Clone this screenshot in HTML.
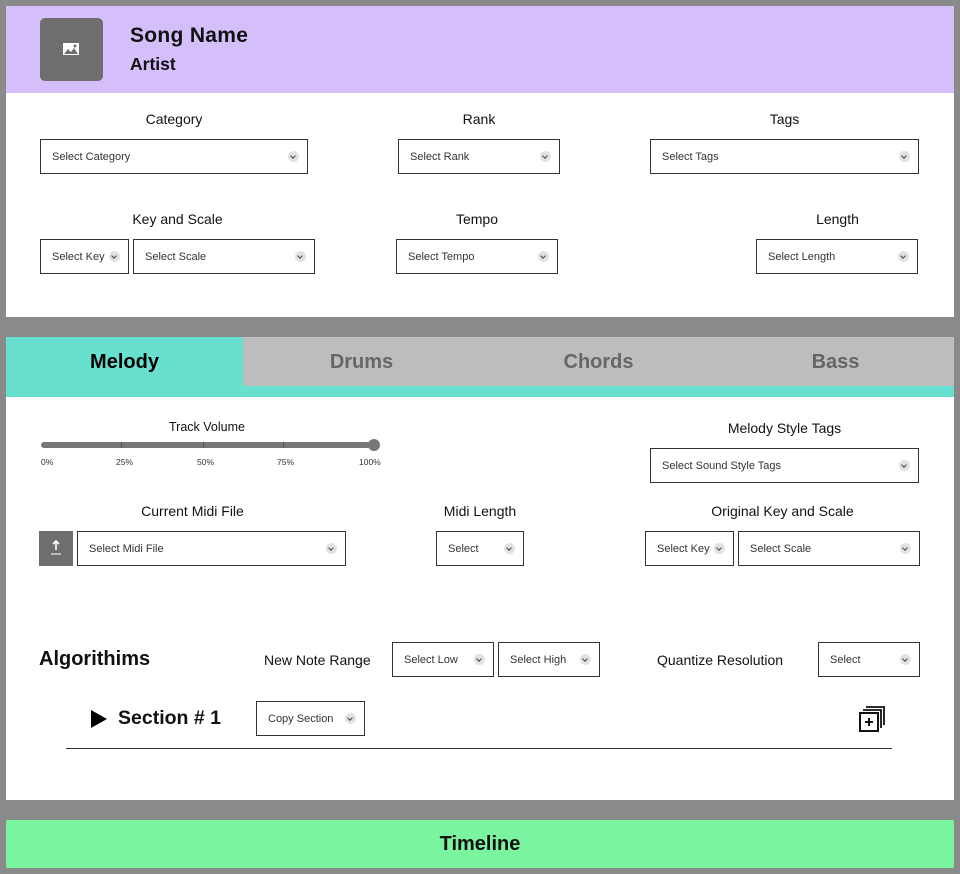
<!DOCTYPE html>
<html><head><meta charset="utf-8"><style>
*{margin:0;padding:0;box-sizing:border-box}
body{width:960px;height:874px;background:#8a8a8a;position:relative;overflow:hidden;font-family:"Liberation Sans",sans-serif;color:#111}
.a{position:absolute}
.p{position:absolute;background:#fff}
.lbl{position:absolute;font-size:14px;color:#111;text-align:center;white-space:nowrap}
.dd{position:absolute;height:35px;border:1px solid #333;background:#fff;font-size:11px;color:#333;padding-left:11px;line-height:35px;white-space:nowrap}
.dd:after{content:"";position:absolute;right:8px;top:11px;width:11px;height:11px;border-radius:50%;background:#e2e2e2}
.dd:before{content:"";position:absolute;right:12px;top:14px;width:3px;height:3px;border-right:1px solid #444;border-bottom:1px solid #444;transform:rotate(45deg);z-index:2}
.tab{position:absolute;top:337px;height:49px;line-height:50px;text-align:center;font-weight:bold;font-size:20px;color:#666}
.tick{position:absolute;font-size:8.5px;color:#333}
</style></head><body>
<div class="p" style="left:6px;top:6px;width:948px;height:311px"></div>
<div class="a" style="left:6px;top:6px;width:948px;height:87px;background:#d4bffa"></div>
<div class="a" style="left:40px;top:18px;width:63px;height:63px;background:#6e6e6e;border-radius:5px"></div>
<svg class="a" style="left:61px;top:40px" width="20" height="18" viewBox="0 0 20 18"><rect x="2" y="3" width="16" height="12" fill="#fff"/><path d="M3 14 L7 9 L10 12 L13 8 L17 14Z" fill="#6e6e6e"/><circle cx="14" cy="6" r="1.5" fill="#6e6e6e"/></svg>
<div class="a" style="left:130px;top:24px;font-size:21px;font-weight:bold;letter-spacing:0.3px">Song Name</div>
<div class="a" style="left:130px;top:54px;font-size:17.5px;font-weight:bold">Artist</div>

<div class="lbl" style="left:40px;width:268px;top:111px">Category</div>
<div class="dd" style="left:40px;top:139px;width:268px">Select Category</div>
<div class="lbl" style="left:398px;width:162px;top:111px">Rank</div>
<div class="dd" style="left:398px;top:139px;width:162px">Select Rank</div>
<div class="lbl" style="left:650px;width:269px;top:111px">Tags</div>
<div class="dd" style="left:650px;top:139px;width:269px">Select Tags</div>

<div class="lbl" style="left:40px;width:275px;top:211px">Key and Scale</div>
<div class="dd" style="left:40px;top:239px;width:89px">Select Key</div>
<div class="dd" style="left:133px;top:239px;width:182px">Select Scale</div>
<div class="lbl" style="left:396px;width:162px;top:211px">Tempo</div>
<div class="dd" style="left:396px;top:239px;width:162px">Select Tempo</div>
<div class="lbl" style="left:757px;width:161px;top:211px">Length</div>
<div class="dd" style="left:756px;top:239px;width:162px">Select Length</div>

<div class="p" style="left:6px;top:337px;width:948px;height:463px"></div>
<div class="a" style="left:6px;top:337px;width:948px;height:60px;background:#68e0cf"></div>
<div class="tab" style="left:6px;width:237px;color:#000">Melody</div>
<div class="tab" style="left:243px;width:711px;background:#bdbdbd"></div>
<div class="tab" style="left:243px;width:237px">Drums</div>
<div class="tab" style="left:480px;width:237px">Chords</div>
<div class="tab" style="left:717px;width:237px">Bass</div>

<div class="lbl" style="left:40px;width:334px;top:420px;font-size:12.5px">Track Volume</div>
<div class="a" style="left:41px;top:442px;width:333px;height:6px;background:#777;border-radius:3px"></div>
<div class="a" style="left:121px;top:442px;width:1px;height:6px;background:#555"></div>
<div class="a" style="left:203px;top:442px;width:1px;height:6px;background:#555"></div>
<div class="a" style="left:283px;top:442px;width:1px;height:6px;background:#555"></div>
<div class="a" style="left:368px;top:439px;width:12px;height:12px;border-radius:50%;background:#777"></div>
<div class="tick" style="left:41px;top:457px">0%</div>
<div class="tick" style="left:116px;top:457px">25%</div>
<div class="tick" style="left:197px;top:457px">50%</div>
<div class="tick" style="left:277px;top:457px">75%</div>
<div class="tick" style="left:359px;top:457px">100%</div>

<div class="lbl" style="left:650px;width:269px;top:420px">Melody Style Tags</div>
<div class="dd" style="left:650px;top:448px;width:269px">Select Sound Style Tags</div>

<div class="lbl" style="left:40px;width:305px;top:503px">Current Midi File</div>
<div class="a" style="left:39px;top:531px;width:34px;height:35px;background:#6e6e6e"></div>
<svg class="a" style="left:48px;top:539px" width="16" height="18" viewBox="0 0 16 18"><path d="M8 2 L8 11 M5 5 L8 2 L11 5" stroke="#fff" stroke-width="1.6" fill="none"/><path d="M3 15 H13" stroke="#fff" stroke-width="1"/></svg>
<div class="dd" style="left:77px;top:531px;width:269px">Select Midi File</div>
<div class="lbl" style="left:436px;width:88px;top:503px">Midi Length</div>
<div class="dd" style="left:436px;top:531px;width:88px">Select</div>
<div class="lbl" style="left:645px;width:275px;top:503px">Original Key and Scale</div>
<div class="dd" style="left:645px;top:531px;width:89px">Select Key</div>
<div class="dd" style="left:738px;top:531px;width:182px">Select Scale</div>

<div class="a" style="left:39px;top:648px;font-size:20px;font-weight:bold">Algorithims</div>
<div class="a" style="left:264px;top:652px;font-size:14px">New Note Range</div>
<div class="dd" style="left:392px;top:642px;width:102px">Select Low</div>
<div class="dd" style="left:498px;top:642px;width:102px">Select High</div>
<div class="a" style="left:657px;top:652px;font-size:14px">Quantize Resolution</div>
<div class="dd" style="left:818px;top:642px;width:102px">Select</div>

<svg class="a" style="left:91px;top:710px" width="16" height="18" viewBox="0 0 16 18"><path d="M0 0 L16 9 L0 18Z" fill="#000"/></svg>
<div class="a" style="left:118px;top:707px;font-size:19.5px;font-weight:bold">Section # 1</div>
<div class="dd" style="left:256px;top:701px;width:109px">Copy Section</div>
<svg class="a" style="left:858px;top:705px" width="28" height="28" viewBox="0 0 28 28"><path d="M8 2 H26 V20" stroke="#111" stroke-width="1.8" fill="none"/><path d="M5 5 H23 V23" stroke="#111" stroke-width="1.8" fill="none"/><rect x="2" y="8" width="18" height="18" fill="#fff" stroke="#111" stroke-width="2"/><path d="M11 13 V21 M7 17 H15" stroke="#111" stroke-width="2"/></svg>
<div class="a" style="left:66px;top:748px;width:826px;height:1px;background:#333"></div>

<div class="a" style="left:6px;top:820px;width:948px;height:48px;background:#7bf4a0;text-align:center;line-height:48px;font-size:20px;font-weight:bold">Timeline</div>
</body></html>
